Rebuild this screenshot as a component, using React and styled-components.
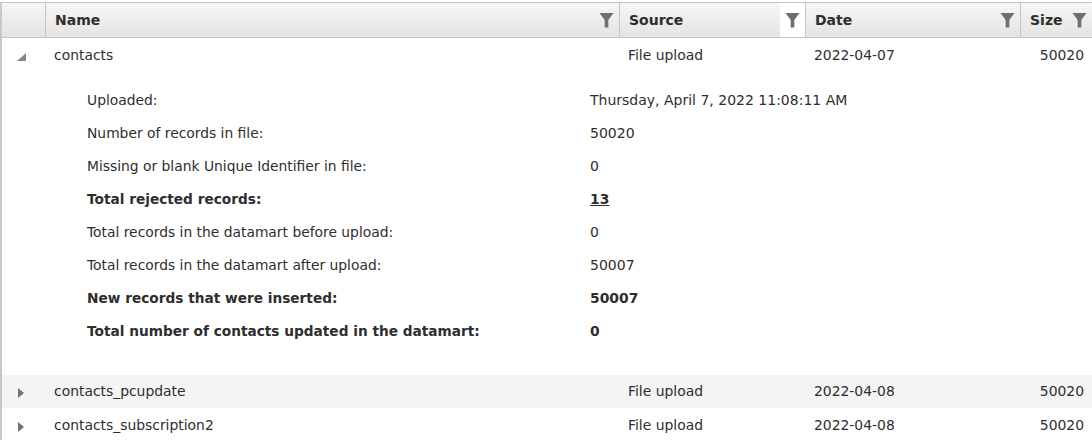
import { createGlobalStyle } from 'styled-components';
import styled from 'styled-components';

const Global = createGlobalStyle`
  html, body {
    margin: 0;
    padding: 0;
    background: #fff;
    overflow: hidden;
  }
`;

const Page = styled.div`
  padding-top: 2px;
  height: 438px;
  overflow: hidden;
  font-family: "DejaVu Sans", Verdana, sans-serif;
  font-size: 13.9px;
  color: #2e2e2e;
`;
const Grid = styled.div`
  border-left: 2px solid #c8c8c8;
`;
const Header = styled.div`
  display: grid;
  grid-template-columns: 43px 574px 186px 215px 1fr;
  height: 34px;
  border-top: 1px solid #c5c5c5;
  border-bottom: 1px solid #c5c5c5;
  background: linear-gradient(#f6f6f6, #e4e4e4);
`;
const HeadCell = styled.div`
  display: flex;
  align-items: center;
  justify-content: space-between;
  padding-left: 9px;
  font-size: 14px;
  font-weight: bold;
  color: #2e2e2e;
  &:not(:first-child) {
    border-left: 1px solid #c5c5c5;
  }
`;
const FilterBox = styled.div`
  width: 25px;
  height: 34px;
  display: flex;
  align-items: center;
  justify-content: center;
  background: ${(p) => (p.$active ? '#fff' : 'transparent')};
`;
const Row = styled.div`
  display: grid;
  grid-template-columns: 43px 574px 186px 215px 1fr;
  height: 33px;
  box-sizing: border-box;
  padding-bottom: ${(p) => (p.$alt ? '2px' : '0')};
  align-items: center;
  background: ${(p) => (p.$alt ? '#f4f4f4' : '#fff')};
`;
const ArrowCell = styled.div`
  display: flex;
  justify-content: center;
  padding: 4px 5px 0 0;
`;
const Cell = styled.div`
  padding-left: 9px;
`;
const NumCell = styled.div`
  text-align: right;
  padding-right: 8px;
`;
const Detail = styled.div`
  padding: 12px 0 28px 85px;
`;
const DetailRow = styled.div`
  display: grid;
  grid-template-columns: 503px 1fr;
  height: 33px;
  align-items: center;
  font-weight: ${(p) => (p.$bold ? 'bold' : 'normal')};
  font-size: ${(p) => (p.$bold ? '13.7px' : '13.85px')};
`;
const DetailValue = styled.div`
  font-size: ${(p) => (p.$bold ? '13.9px' : '14px')};
`;
const RejectLink = styled.a`
  color: #2e2e2e;
  text-decoration: underline;
`;

const FilterIcon = () => (
  <svg width="15" height="16" viewBox="0 0 15 16">
    <path d="M0.5 1h14L9.3 8v7.5H5.7V8z" fill="#716d6a" />
  </svg>
);

const ArrowRight = () => (
  <svg width="6" height="10" viewBox="0 0 6 10">
    <path d="M0 0l6 5-6 5z" fill="#76726f" />
  </svg>
);

const ArrowOpen = () => (
  <svg width="9" height="8" viewBox="0 0 9 8">
    <path d="M9 0v8H0z" fill="#8a8684" />
  </svg>
);

const columns = [
  { label: 'Name' },
  { label: 'Source', active: true },
  { label: 'Date' },
  { label: 'Size' },
];

const details = [
  { label: 'Uploaded:', value: 'Thursday, April 7, 2022 11:08:11 AM' },
  { label: 'Number of records in file:', value: '50020' },
  { label: 'Missing or blank Unique Identifier in file:', value: '0' },
  { label: 'Total rejected records:', value: '13', bold: true, link: true },
  { label: 'Total records in the datamart before upload:', value: '0' },
  { label: 'Total records in the datamart after upload:', value: '50007' },
  { label: 'New records that were inserted:', value: '50007', bold: true },
  { label: 'Total number of contacts updated in the datamart:', value: '0', bold: true },
];

const DataRow = ({ name, date, open, alt }) => (
  <Row $alt={alt}>
    <ArrowCell>{open ? <ArrowOpen /> : <ArrowRight />}</ArrowCell>
    <Cell>{name}</Cell>
    <Cell>File upload</Cell>
    <Cell>{date}</Cell>
    <NumCell>50020</NumCell>
  </Row>
);

export default function App() {
  return (
    <Page>
      <Global />
      <Grid>
        <Header>
          <HeadCell />
          {columns.map((c) => (
            <HeadCell key={c.label}>
              {c.label}
              <FilterBox $active={c.active}>
                <FilterIcon />
              </FilterBox>
            </HeadCell>
          ))}
        </Header>
        <DataRow name="contacts" date="2022-04-07" open />
        <Detail>
          {details.map((d) => (
            <DetailRow key={d.label} $bold={d.bold}>
              <div>{d.label}</div>
              <DetailValue $bold={d.bold}>
                {d.link ? <RejectLink href="#">{d.value}</RejectLink> : d.value}
              </DetailValue>
            </DetailRow>
          ))}
        </Detail>
        <DataRow name="contacts_pcupdate" date="2022-04-08" alt />
        <DataRow name="contacts_subscription2" date="2022-04-08" />
      </Grid>
    </Page>
  );
}
